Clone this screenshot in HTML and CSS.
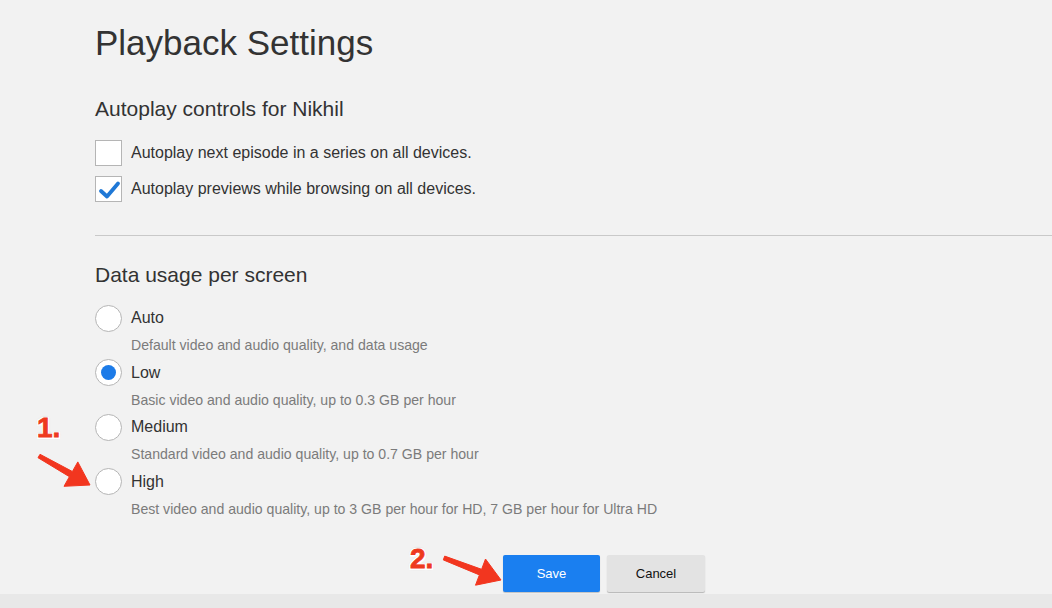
FILE: index.html
```html
<!DOCTYPE html>
<html lang="en">
<head>
<meta charset="utf-8">
<title>Playback Settings</title>
<link rel="stylesheet" href="styles.css">
</head>
<body>
<main class="page">
  <h1 class="title">Playback Settings</h1>

  <section class="section">
    <h2 class="section-title">Autoplay controls for Nikhil</h2>
    <label class="check-row">
      <span class="checkbox"></span>
      <span class="check-label">Autoplay next episode in a series on all devices.</span>
    </label>
    <label class="check-row">
      <span class="checkbox">
        <svg class="checkmark" viewBox="0 0 26 26" width="26" height="26"><path d="M6 15 L12 20.5 L23 7.5" fill="none" stroke="#1f78d6" stroke-width="3.8" stroke-linecap="round" stroke-linejoin="round"/></svg>
      </span>
      <span class="check-label">Autoplay previews while browsing on all devices.</span>
    </label>
  </section>

  <hr class="divider">

  <section class="section">
    <h2 class="section-title data-title">Data usage per screen</h2>
    <div class="radio-item">
      <div class="radio-row"><span class="radio"></span><span class="radio-label">Auto</span></div>
      <div class="radio-desc">Default video and audio quality, and data usage</div>
    </div>
    <div class="radio-item">
      <div class="radio-row"><span class="radio radio-on"><span class="dot"></span></span><span class="radio-label">Low</span></div>
      <div class="radio-desc">Basic video and audio quality, up to 0.3 GB per hour</div>
    </div>
    <div class="radio-item">
      <div class="radio-row"><span class="radio"></span><span class="radio-label">Medium</span></div>
      <div class="radio-desc">Standard video and audio quality, up to 0.7 GB per hour</div>
    </div>
    <div class="radio-item">
      <div class="radio-row"><span class="radio"></span><span class="radio-label">High</span></div>
      <div class="radio-desc">Best video and audio quality, up to 3 GB per hour for HD, 7 GB per hour for Ultra HD</div>
    </div>
  </section>

  <div class="buttons">
    <button class="btn btn-save">Save</button>
    <button class="btn btn-cancel">Cancel</button>
  </div>
</main>
<div class="footer-band"></div>

<div class="note note-1">1.</div>
<div class="note note-2">2.</div>
<svg class="arrows" width="1052" height="608" viewBox="0 0 1052 608">
  <polygon fill="#f2361f" stroke="#f2361f" stroke-width="1" stroke-linejoin="round" points="40.0,454.3 72.4,471.5 77.8,461.9 90,485 64.0,486.3 69.4,476.7 38.0,457.7"/>
  <polygon fill="#f2361f" stroke="#f2361f" stroke-width="1" stroke-linejoin="round" points="444.7,556.1 481.6,569.3 485.5,559.0 501,580 475.5,585.2 479.4,574.9 443.3,559.9"/>
</svg>
</body>
</html>
```

FILE: styles.css
```css
html, body {
  margin: 0;
  padding: 0;
}
body {
  width: 1052px;
  height: 608px;
  overflow: hidden;
  background: #e8e8e8;
  font-family: "Liberation Sans", Arial, Helvetica, sans-serif;
  color: #333;
  position: relative;
}
.page {
  background: #f2f2f2;
  padding: 23px 0 2px 95px;
  height: 569px;
}
.title {
  margin: 0;
  font-size: 35px;
  line-height: 40px;
  font-weight: normal;
  color: #333;
}
.section-title {
  margin: 33px 0 18px;
  font-size: 21px;
  line-height: 26px;
  font-weight: normal;
  color: #333;
}
.data-title {
  margin-top: 26px;
  margin-bottom: 17px;
}
.check-row {
  display: flex;
  align-items: center;
  gap: 9px;
  height: 26px;
  margin-bottom: 10px;
}
.checkbox {
  box-sizing: border-box;
  width: 27px;
  height: 26px;
  background: #fff;
  border: 1px solid #b5b5b5;
  position: relative;
  flex: none;
}
.checkmark {
  position: absolute;
  left: -1px;
  top: -1px;
}
.check-label {
  font-size: 16px;
  color: #333;
}
.divider {
  border: 0;
  border-top: 1px solid #c9c9c9;
  margin: 33px 0 0;
  height: 0;
}
.radio-item {
  margin-bottom: 5.5px;
}
.radio-row {
  display: flex;
  align-items: center;
  gap: 9px;
  height: 26px;
}
.radio {
  box-sizing: border-box;
  width: 27px;
  height: 27px;
  border-radius: 50%;
  background: #fff;
  border: 1px solid #b5b5b5;
  flex: none;
  display: flex;
  align-items: center;
  justify-content: center;
}
.dot {
  width: 15px;
  height: 15px;
  border-radius: 50%;
  background: #1c7be8;
}
.radio-label {
  font-size: 16px;
  color: #333;
}
.radio-desc {
  margin: 5px 0 0 36px;
  font-size: 14.1px;
  line-height: 18px;
  color: #7b7b7b;
}
.buttons {
  display: flex;
  gap: 7px;
  margin-top: 37px;
  padding-left: 408px;
}
.btn {
  height: 37px;
  border: 0;
  border-radius: 2px;
  font-family: "Liberation Sans", Arial, sans-serif;
  font-size: 13px;
  padding: 0;
}
.btn-save {
  width: 97px;
  background: #1a7ff0;
  color: #fff;
  box-shadow: 0 1px 1px rgba(0, 0, 0, 0.2);
}
.btn-cancel {
  width: 98px;
  background: #e3e3e3;
  color: #111;
  box-shadow: 0 1px 1px rgba(0, 0, 0, 0.25);
}
.footer-band {
  height: 14px;
}
.note {
  position: absolute;
  font-family: "Liberation Sans", Arial, sans-serif;
  font-weight: bold;
  font-size: 28px;
  line-height: 28px;
  color: #ee3a1e;
  -webkit-text-stroke: 0.8px #ee3a1e;
  text-shadow:
    1.5px 0 0 #fff, -1.5px 0 0 #fff, 0 1.5px 0 #fff, 0 -1.5px 0 #fff,
    1.5px 1.5px 0 #fff, -1.5px -1.5px 0 #fff, 1.5px -1.5px 0 #fff, -1.5px 1.5px 0 #fff,
    0 0 3px rgba(0, 0, 0, 0.3);
}
.note-1 {
  left: 37px;
  top: 414px;
}
.note-2 {
  left: 410px;
  top: 545px;
}
.arrows {
  position: absolute;
  left: 0;
  top: 0;
  pointer-events: none;
}
```
